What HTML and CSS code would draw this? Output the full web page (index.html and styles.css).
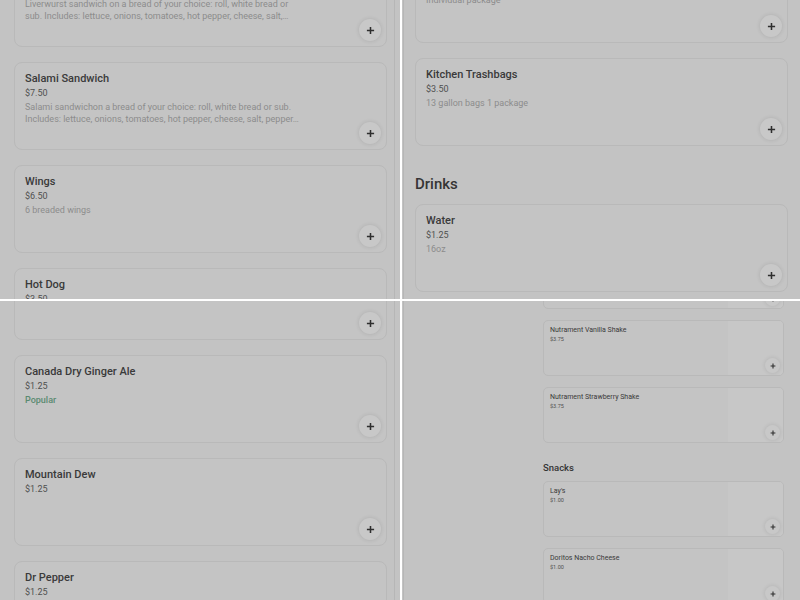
FILE: index.html
```html
<!DOCTYPE html>
<html>
<head>
<meta charset="utf-8">
<link rel="stylesheet" href="styles.css">
</head>
<body>
<div class="grid">
  <section class="panel">
    <div class="frame frame-right">
      <div class="list list-tl">
        <div class="card">
          <div class="title">Liverwurst Sandwich</div>
          <div class="price">$7.50</div>
          <div class="desc"><span>Liverwurst sandwich on a bread of your choice: roll, white bread or</span><span>sub. Includes: lettuce, onions, tomatoes, hot pepper, cheese, salt,…</span></div>
          <button class="add" type="button"><svg viewBox="0 0 10 10"><path d="M5 1v8M1 5h8"/></svg></button>
        </div>
        <div class="card">
          <div class="title">Salami Sandwich</div>
          <div class="price">$7.50</div>
          <div class="desc"><span>Salami sandwichon a bread of your choice: roll, white bread or sub.</span><span>Includes: lettuce, onions, tomatoes, hot pepper, cheese, salt, pepper…</span></div>
          <button class="add" type="button"><svg viewBox="0 0 10 10"><path d="M5 1v8M1 5h8"/></svg></button>
        </div>
        <div class="card">
          <div class="title">Wings</div>
          <div class="price">$6.50</div>
          <div class="desc"><span>6 breaded wings</span></div>
          <button class="add" type="button"><svg viewBox="0 0 10 10"><path d="M5 1v8M1 5h8"/></svg></button>
        </div>
        <div class="card">
          <div class="title">Hot Dog</div>
          <div class="price">$3.50</div>
          <button class="add" type="button"><svg viewBox="0 0 10 10"><path d="M5 1v8M1 5h8"/></svg></button>
        </div>
      </div>
    </div>
  </section>

  <section class="panel">
    <div class="frame frame-left">
      <div class="list list-tr">
        <div class="card">
          <div class="title">Paper Towels</div>
          <div class="price">$2.50</div>
          <div class="desc"><span>Individual package</span></div>
          <button class="add" type="button"><svg viewBox="0 0 10 10"><path d="M5 1v8M1 5h8"/></svg></button>
        </div>
        <div class="card">
          <div class="title">Kitchen Trashbags</div>
          <div class="price">$3.50</div>
          <div class="desc"><span>13 gallon bags 1 package</span></div>
          <button class="add" type="button"><svg viewBox="0 0 10 10"><path d="M5 1v8M1 5h8"/></svg></button>
        </div>
        <h2 class="section-title">Drinks</h2>
        <div class="card">
          <div class="title">Water</div>
          <div class="price">$1.25</div>
          <div class="desc"><span>16oz</span></div>
          <button class="add" type="button"><svg viewBox="0 0 10 10"><path d="M5 1v8M1 5h8"/></svg></button>
        </div>
      </div>
    </div>
  </section>

  <section class="panel">
    <div class="frame frame-right">
      <div class="list list-bl">
        <div class="card">
          <div class="title">Pepsi</div>
          <div class="price">$1.25</div>
          <div class="desc"><span>20oz bottle</span></div>
          <button class="add" type="button"><svg viewBox="0 0 10 10"><path d="M5 1v8M1 5h8"/></svg></button>
        </div>
        <div class="card">
          <div class="title">Canada Dry Ginger Ale</div>
          <div class="price">$1.25</div>
          <div class="tag">Popular</div>
          <button class="add" type="button"><svg viewBox="0 0 10 10"><path d="M5 1v8M1 5h8"/></svg></button>
        </div>
        <div class="card">
          <div class="title">Mountain Dew</div>
          <div class="price">$1.25</div>
          <button class="add" type="button"><svg viewBox="0 0 10 10"><path d="M5 1v8M1 5h8"/></svg></button>
        </div>
        <div class="card">
          <div class="title">Dr Pepper</div>
          <div class="price">$1.25</div>
          <button class="add" type="button"><svg viewBox="0 0 10 10"><path d="M5 1v8M1 5h8"/></svg></button>
        </div>
      </div>
    </div>
  </section>

  <section class="panel">
    <div class="frame frame-left frame-wide">
      <div class="list list-br">
        <div class="card card-sm">
          <div class="info"><div class="title">Nutrament Chocolate Shake</div><div class="price">$3.75</div></div>
          <div class="thumb"></div>
          <button class="add" type="button"><svg viewBox="0 0 10 10"><path d="M5 1v8M1 5h8"/></svg></button>
        </div>
        <div class="card card-sm">
          <div class="info"><div class="title">Nutrament Vanilla Shake</div><div class="price">$3.75</div></div>
          <div class="thumb"></div>
          <button class="add" type="button"><svg viewBox="0 0 10 10"><path d="M5 1v8M1 5h8"/></svg></button>
        </div>
        <div class="card card-sm">
          <div class="info"><div class="title">Nutrament Strawberry Shake</div><div class="price">$3.75</div></div>
          <div class="thumb"></div>
          <button class="add" type="button"><svg viewBox="0 0 10 10"><path d="M5 1v8M1 5h8"/></svg></button>
        </div>
        <h2 class="section-title">Snacks</h2>
        <div class="card card-sm">
          <div class="info"><div class="title">Lay's</div><div class="price">$1.00</div></div>
          <div class="thumb"></div>
          <button class="add" type="button"><svg viewBox="0 0 10 10"><path d="M5 1v8M1 5h8"/></svg></button>
        </div>
        <div class="card card-sm">
          <div class="info"><div class="title">Doritos Nacho Cheese</div><div class="price">$1.00</div></div>
          <div class="thumb"></div>
          <button class="add" type="button"><svg viewBox="0 0 10 10"><path d="M5 1v8M1 5h8"/></svg></button>
        </div>
      </div>
    </div>
  </section>
</div>
</body>
</html>
```

FILE: styles.css
```css
html, body {
  margin: 0;
  padding: 0;
  background: #ffffff;
}

body {
  font-family: Roboto, "Liberation Sans", sans-serif;
  color: #3c3c3c;
}

.grid {
  display: grid;
  grid-template-columns: 400px 398px;
  grid-template-rows: 299px 299px;
  gap: 2px;
  width: 800px;
  height: 600px;
}

.panel {
  background: #c3c3c3;
  overflow: hidden;
  display: flex;
}

.frame {
  box-sizing: border-box;
  height: 100%;
}

.frame-right {
  width: 395px;
  border-right: 1px solid #b6b6b6;
  padding-left: 14px;
}

.frame-left {
  flex: 1;
  margin-left: 1px;
  border-left: 1px solid #b6b6b6;
  padding-left: 11px;
}

.frame.frame-wide {
  padding-left: 139px;
}

.list {
  display: flex;
  flex-direction: column;
  width: 373px;
}

.list-tl { margin-top: -41px; }
.list-tr { margin-top: -45px; }
.list-bl { margin-top: -49px; }
.list-br { margin-top: -48px; width: 241px; }

.card {
  position: relative;
  flex: none;
  box-sizing: border-box;
  height: 88px;
  margin-bottom: 15px;
  padding: 8px 10px 0;
  border: 1px solid #b9b9b9;
  border-radius: 8px;
  background: #c4c4c4;
}

.title {
  font-size: 11px;
  line-height: 15px;
  font-weight: 500;
  color: #3a3a3a;
  white-space: nowrap;
}

.price {
  font-size: 9px;
  line-height: 15px;
  color: #505050;
}

.desc {
  font-size: 9px;
  line-height: 12px;
  color: #8c8c8c;
}

.desc span {
  display: block;
  white-space: nowrap;
}

.tag {
  font-size: 9px;
  line-height: 12px;
  font-weight: 500;
  color: #5a8a70;
}

.add {
  position: absolute;
  right: 5px;
  bottom: 5px;
  width: 22px;
  height: 22px;
  padding: 0;
  border: none;
  border-radius: 50%;
  background: #c8c8c8;
  box-shadow: 0 0 4px rgba(0, 0, 0, 0.12);
  display: flex;
  align-items: center;
  justify-content: center;
}

.add svg {
  width: 9px;
  height: 9px;
  fill: none;
  stroke: #2e2e2e;
  stroke-width: 1.7;
}

.section-title {
  margin: 13px 0 10px;
  font-size: 15px;
  line-height: 20px;
  font-weight: 500;
  color: #353535;
}

.card-sm {
  display: flex;
  height: 56px;
  margin-bottom: 11px;
  padding: 0;
  border-radius: 5px;
  overflow: hidden;
}

.card-sm .info {
  flex: 1;
  padding: 5px 6px 0;
}

.card-sm .title {
  font-size: 7px;
  line-height: 9px;
  font-weight: 400;
}

.card-sm .price {
  font-size: 5.5px;
  line-height: 9px;
}

.card-sm .thumb {
  width: 55px;
  background: #c7c7c7;
}

.card-sm .add {
  right: 3px;
  bottom: 2px;
  width: 15px;
  height: 15px;
}

.card-sm .add svg {
  width: 6px;
  height: 6px;
  stroke-width: 1.8;
}

.list-br .section-title {
  margin: 8px 0 7px;
  font-size: 9.5px;
  line-height: 12px;
}
```
